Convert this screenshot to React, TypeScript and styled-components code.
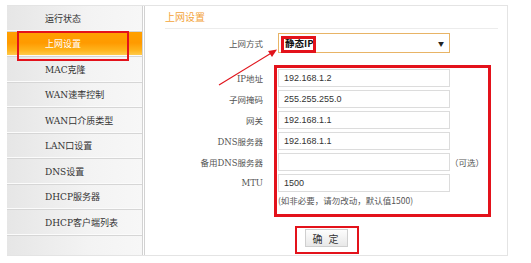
import React from 'react';
import styled, { createGlobalStyle } from 'styled-components';

const GlobalStyle = createGlobalStyle`
  html, body {
    margin: 0;
    padding: 0;
    background: #fff;
  }
  body {
    font-family: "Liberation Sans", "Noto Sans CJK SC", sans-serif;
    color: #333;
  }
`;

const MENU = ['运行状态', '上网设置', 'MAC克隆', 'WAN速率控制', 'WAN口介质类型', 'LAN口设置', 'DNS设置', 'DHCP服务器', 'DHCP客户端列表'];

const FIELDS = [
  { label: 'IP地址', value: '192.168.1.2' },
  { label: '子网掩码', value: '255.255.255.0' },
  { label: '网关', value: '192.168.1.1' },
  { label: 'DNS服务器', value: '192.168.1.1' },
  { label: '备用DNS服务器', value: '', note: '（可选）' },
  { label: 'MTU', value: '1500' },
];

const App = () => {
  return (
    <>
      <GlobalStyle />
      <Frame>
        <Sidebar>
          {MENU.map(item => (
            <MenuItem key={item} $active={item === '上网设置'}>
              {item}
            </MenuItem>
          ))}
          <MenuFill />
        </Sidebar>
        <Main>
          <Title>上网设置</Title>
          <Form>
            <SelectRow>
              <Label>上网方式</Label>
              <FakeSelect>
                <span>静态IP</span>
                <Caret>▼</Caret>
              </FakeSelect>
            </SelectRow>
            {FIELDS.map(f => (
              <FieldRow key={f.label}>
                <Label>{f.label}</Label>
                <Input defaultValue={f.value} />
                {f.note && <Note>{f.note}</Note>}
              </FieldRow>
            ))}
            <Hint>(如非必要，请勿改动，默认值1500)</Hint>
            <ButtonRow>
              <OkButton>确 定</OkButton>
            </ButtonRow>
          </Form>
        </Main>

        <MarkBox style={{ left: 10, top: 25, width: 112, height: 30 }} $w={2} />
        <MarkBox style={{ left: 274, top: 30, width: 35, height: 17 }} $w={3} />
        <MarkBox style={{ left: 267, top: 59, width: 217, height: 152 }} $w={3} />
        <MarkBox style={{ left: 288, top: 220, width: 64, height: 28 }} $w={2} />
        <Arrow viewBox="0 0 500 250" width={500} height={250}>
          <line x1="212" y1="79" x2="266" y2="46" stroke="#e0141c" strokeWidth="1.2" />
          <polygon points="270,43.5 261,45 265,51" fill="#e0141c" />
        </Arrow>
      </Frame>
    </>
  );
};

const Frame = styled.div`
  position: relative;
  display: flex;
  box-sizing: border-box;
  margin: 5px 0 0 7px;
  width: 501px;
  height: 251px;
  border: 1px solid #e4e4e4;
  border-left: none;
`;

const Sidebar = styled.div`
  display: flex;
  flex-direction: column;
  width: 135px;
  border-right: 3px double #d2d2d2;
`;

const MenuItem = styled.div<{ $active?: boolean }>`
  box-sizing: border-box;
  height: 25.5px;
  padding-left: 38px;
  display: flex;
  align-items: center;
  font-size: 9px;
  font-family: "DejaVu Serif", "Noto Sans CJK SC", serif;
  border-bottom: 1px solid #d6d6d6;
  box-shadow: inset 0 -1px 0 #fbfbfb;
  color: ${p => (p.$active ? '#fff' : '#333')};
  background: ${p =>
    p.$active
      ? 'linear-gradient(#ffa000, #ff9a00 45%, #ffb21a 75%, #ffcf55)'
      : 'linear-gradient(to right, #e6e6e6, #f3f3f3 60%, #f7f7f7)'};
`;

const MenuFill = styled.div`
  flex: 1;
  background: linear-gradient(to right, #e6e6e6, #f3f3f3 60%, #f7f7f7);
`;

const Main = styled.div`
  flex: 1;
  display: flex;
  flex-direction: column;
  padding-left: 20px;
`;

const Title = styled.div`
  box-sizing: border-box;
  height: 23px;
  margin-right: 9px;
  display: flex;
  align-items: center;
  padding-bottom: 1px;
  font-size: 10px;
  font-family: "Noto Sans CJK SC", sans-serif;
  color: #f3a43a;
  border-bottom: 1px solid #ececec;
`;

const Form = styled.div`
  display: flex;
  flex-direction: column;
  padding-top: 4px;
`;

const Label = styled.div`
  width: 98px;
  margin-right: 15px;
  text-align: right;
  font-size: 8.5px;
  font-family: "DejaVu Serif", "Noto Sans CJK SC", serif;
  color: #555;
`;

const SelectRow = styled.div`
  display: flex;
  align-items: center;
  height: 20px;
  margin-bottom: 14px;
`;

const FakeSelect = styled.div`
  box-sizing: border-box;
  width: 172px;
  height: 20px;
  border: 1px solid #e8b466;
  background: #fff;
  display: flex;
  align-items: center;
  justify-content: space-between;
  padding: 0 5px 0 6px;
  font-size: 9.5px;
  font-weight: 600;
  font-family: "Noto Sans CJK SC", sans-serif;
  color: #111;
`;

const Caret = styled.span`
  font-size: 6px;
  font-weight: normal;
  color: #222;
`;

const FieldRow = styled.div`
  display: flex;
  align-items: center;
  height: 21px;
`;

const Input = styled.input`
  box-sizing: border-box;
  width: 172px;
  height: 18px;
  margin: 0;
  padding: 0 0 0 5px;
  border: 1px solid #dcdcdc;
  font-size: 9px;
  font-family: "Liberation Sans", sans-serif;
  color: #333;
  outline: none;
`;

const Note = styled.span`
  margin-left: 0;
  font-size: 8.5px;
  font-family: "Noto Sans CJK SC", sans-serif;
  color: #555;
`;

const Hint = styled.div`
  height: 14px;
  line-height: 14px;
  margin-left: 113px;
  font-size: 8.5px;
  font-family: "Noto Sans CJK SC", sans-serif;
  color: #555;
`;

const ButtonRow = styled.div`
  display: flex;
  margin: 22px 0 0 140px;
`;

const OkButton = styled.button`
  box-sizing: border-box;
  width: 43px;
  height: 18px;
  padding: 0;
  border: 1px solid #cfcfcf;
  background: linear-gradient(#fdfdfd, #e8e8e8);
  font-size: 10px;
  font-family: "Noto Sans CJK SC", sans-serif;
  color: #333;
  letter-spacing: 2px;
`;

const MarkBox = styled.div<{ $w: number }>`
  position: absolute;
  box-sizing: border-box;
  border: ${p => p.$w}px solid #e3121b;
  pointer-events: none;
`;

const Arrow = styled.svg`
  position: absolute;
  left: 0;
  top: 0;
  pointer-events: none;
`;

export default App;
